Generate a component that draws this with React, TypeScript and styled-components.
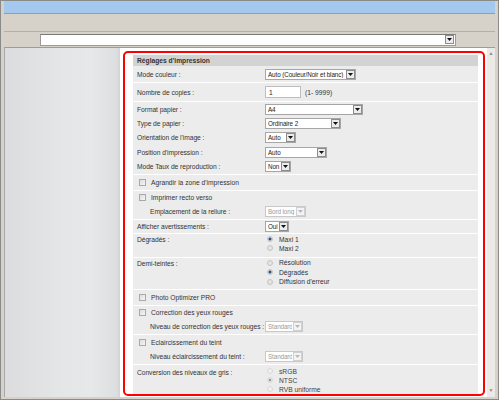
import React from "react";
import styled, { createGlobalStyle } from "styled-components";

const GlobalStyle = createGlobalStyle`
  html, body {
    margin: 0;
    padding: 0;
    background: #ffffff;
  }
  body {
    font-family: "Liberation Sans", Arial, sans-serif;
  }
`;

const Frame = styled.div`
  box-sizing: border-box;
  width: 499px;
  height: 400px;
  border: 1px solid #8a8a8a;
  padding: 0 3px 2px 3px;
  background: #d6d2ca;
  display: flex;
  flex-direction: column;
  overflow: hidden;
`;

const TitleBar = styled.div`
  height: 12px;
  flex: 0 0 auto;
  background: #a5c8ef;
  border-bottom: 1px solid #9c9c9c;
`;

const Toolbar = styled.div`
  height: 17px;
  flex: 0 0 auto;
  background: #d6d2ca;
  border-bottom: 1px solid #b4b0a8;
`;

const AddressRow = styled.div`
  height: 15px;
  flex: 0 0 auto;
  display: flex;
  align-items: center;
  padding-left: 36px;
`;

const AddressBox = styled.div`
  box-sizing: border-box;
  width: 416px;
  height: 12px;
  background: #ffffff;
  border: 1px solid #9a9a9a;
  border-top-color: #7a7a7a;
  display: flex;
  justify-content: flex-end;
  align-items: center;
  padding-right: 1px;
`;

const Body = styled.div`
  flex: 1 1 auto;
  display: flex;
  border-top: 1px solid #9c9c9c;
  border-left: 1px solid #a8a8a8;
  min-height: 0;
`;

const Sidebar = styled.div`
  width: 115px;
  flex: 0 0 auto;
  background: linear-gradient(to right, #dcdcde, #e4e5e7 45%, #e7e8ea 75%, #dddee0 97%, #d2d3d5);
`;

const Main = styled.div`
  flex: 1 1 auto;
  display: flex;
  background: #ffffff;
  min-width: 0;
`;

const Content = styled.div`
  flex: 1 1 auto;
  display: flex;
  flex-direction: column;
  padding: 3px 2px 1px 3px;
  min-width: 0;
`;

const Scrollbar = styled.div`
  width: 8px;
  flex: 0 0 auto;
  background: #ebeae7;
  display: flex;
  flex-direction: column;
  justify-content: space-between;
  align-items: center;
  padding: 3px 0 4px;
  box-sizing: border-box;
`;

const RedBox = styled.div`
  flex: 1 1 auto;
  border: 2px solid #ff0000;
  border-radius: 5px;
  padding: 2px 5px 0 8px;
  overflow: hidden;
`;

const Panel = styled.div`
  background: #ececec;
  color: #333333;
  font-size: 6.7px;
  display: flex;
  flex-direction: column;
`;

const PanelHeader = styled.div`
  height: 11px;
  line-height: 11px;
  background: #d3d3d3;
  font-weight: bold;
  padding-left: 4px;
  color: #333333;
`;

const Group = styled.div<{ $pt?: number }>`
  display: flex;
  flex-direction: column;
  padding-top: ${(p) => p.$pt ?? 0}px;
  & + & {
    border-top: 1px solid #ffffff;
  }
`;

const Row = styled.div<{ $h: number }>`
  height: ${(p) => p.$h}px;
  display: flex;
  align-items: center;
  padding-left: 4px;
`;

const ChoiceRow = styled.div<{ $h: number }>`
  height: ${(p) => p.$h}px;
  display: flex;
  align-items: flex-start;
  padding-left: 4px;
`;

const Label = styled.div<{ $indent?: boolean; $lh?: number }>`
  width: ${(p) => (p.$indent ? 115 : 128)}px;
  padding-left: ${(p) => (p.$indent ? 13 : 0)}px;
  flex: 0 0 auto;
  white-space: nowrap;
  letter-spacing: -0.05px;
  line-height: ${(p) => (p.$lh ? `${p.$lh}px` : "normal")};
`;

const CheckLine = styled.label`
  display: flex;
  align-items: center;
  gap: 5px;
  padding-left: 2px;
  white-space: nowrap;
`;

const CheckBox = styled.span`
  box-sizing: border-box;
  width: 7px;
  height: 7px;
  border: 1px solid #a9a9a9;
  background: linear-gradient(135deg, #dcdcdc, #f6f6f6);
`;

const ChoiceList = styled.div<{ $line: number }>`
  display: flex;
  flex-direction: column;
  padding-left: 2px;
  & > * {
    height: ${(p) => p.$line}px;
  }
`;

const RadioLine = styled.div<{ $disabled?: boolean }>`
  display: flex;
  align-items: center;
  gap: 6px;
  white-space: nowrap;
  color: ${(p) => (p.$disabled ? "#444444" : "#333333")};
`;

const Radio = styled.span<{ $checked?: boolean; $disabled?: boolean }>`
  box-sizing: border-box;
  width: 6px;
  height: 6px;
  border-radius: 50%;
  border: 1px solid ${(p) => (p.$disabled ? "#d8d8d8" : "#c4c4c4")};
  background: ${(p) =>
    p.$checked
      ? p.$disabled
        ? "radial-gradient(circle, #9a9a9a 0 1.3px, #e6e6e6 1.6px)"
        : "radial-gradient(circle, #2a4f86 0 1.4px, #dfe6ef 1.7px)"
      : p.$disabled
      ? "#f0f0f0"
      : "#e4e4e4"};
`;

const SelectBox = styled.div<{ $w: number; $disabled?: boolean }>`
  box-sizing: border-box;
  width: ${(p) => p.$w}px;
  height: 11px;
  background: #ffffff;
  border: 1px solid ${(p) => (p.$disabled ? "#c8c8c8" : "#a6a6a6")};
  display: flex;
  align-items: center;
  gap: 1px;
  padding-left: 2px;
  font-size: 6.3px;
  letter-spacing: -0.1px;
  color: ${(p) => (p.$disabled ? "#9a9a9a" : "#222222")};
  white-space: nowrap;
  overflow: hidden;
`;

const SelectText = styled.span`
  flex: 1 1 auto;
  overflow: hidden;
`;

const ArrowButton = styled.span<{ $disabled?: boolean }>`
  box-sizing: border-box;
  width: 9px;
  height: 9px;
  flex: 0 0 auto;
  border: 1px solid ${(p) => (p.$disabled ? "#d0d0d0" : "#8c8c8c")};
  background: ${(p) => (p.$disabled ? "#f4f4f4" : "#ececec")};
  display: flex;
  align-items: center;
  justify-content: center;
`;

const TextInput = styled.div`
  box-sizing: border-box;
  width: 36px;
  height: 12px;
  background: #ffffff;
  border: 1px solid #bdbdbd;
  padding-left: 3px;
  display: flex;
  align-items: center;
  color: #222222;
`;

const Hint = styled.span`
  margin-left: 4px;
`;

const ScrollArrow = styled.span`
  font-size: 5px;
  color: #8a8a8a;
  line-height: 5px;
`;

function Triangle({ color = "#111111" }: { color?: string }) {
  return (
    <svg width="5" height="3" viewBox="0 0 5 3">
      <path d="M0 0 H5 L2.5 3 Z" fill={color} />
    </svg>
  );
}

function Select({ w, value, disabled }: { w: number; value: string; disabled?: boolean }) {
  return (
    <SelectBox $w={w} $disabled={disabled}>
      <SelectText>{value}</SelectText>
      <ArrowButton $disabled={disabled}>
        <Triangle color={disabled ? "#b8b8b8" : "#111111"} />
      </ArrowButton>
    </SelectBox>
  );
}

function Check({ text }: { text: string }) {
  return (
    <CheckLine>
      <CheckBox />
      {text}
    </CheckLine>
  );
}

export default function App() {
  return (
    <>
      <GlobalStyle />
      <Frame>
        <TitleBar />
        <Toolbar />
        <AddressRow>
          <AddressBox>
            <ArrowButton>
              <Triangle />
            </ArrowButton>
          </AddressBox>
        </AddressRow>
        <Body>
          <Sidebar />
          <Main>
            <Content>
              <RedBox>
                <Panel>
                  <PanelHeader>Réglages d'impression</PanelHeader>

                  <Group>
                    <Row $h={16}>
                      <Label>Mode couleur :</Label>
                      <Select w={91} value="Auto (Couleur/Noir et blanc)" />
                    </Row>
                  </Group>

                  <Group>
                    <Row $h={18}>
                      <Label>Nombre de copies :</Label>
                      <TextInput>1</TextInput>
                      <Hint>(1- 9999)</Hint>
                    </Row>
                  </Group>

                  <Group>
                    <Row $h={14.4}>
                      <Label>Format papier :</Label>
                      <Select w={98} value="A4" />
                    </Row>
                    <Row $h={14.4}>
                      <Label>Type de papier :</Label>
                      <Select w={76} value="Ordinaire 2" />
                    </Row>
                    <Row $h={14.4}>
                      <Label>Orientation de l'image :</Label>
                      <Select w={31} value="Auto" />
                    </Row>
                    <Row $h={14.4}>
                      <Label>Position d'impression :</Label>
                      <Select w={62} value="Auto" />
                    </Row>
                    <Row $h={14.4}>
                      <Label>Mode Taux de reproduction :</Label>
                      <Select w={26} value="Non" />
                    </Row>
                  </Group>

                  <Group>
                    <Row $h={15}>
                      <Check text="Agrandir la zone d'impression" />
                    </Row>
                  </Group>

                  <Group>
                    <Row $h={14}>
                      <Check text="Imprimer recto verso" />
                    </Row>
                    <Row $h={14}>
                      <Label $indent>Emplacement de la reliure :</Label>
                      <Select w={41} value="Bord long" disabled />
                    </Row>
                  </Group>

                  <Group>
                    <Row $h={13}>
                      <Label>Afficher avertissements :</Label>
                      <Select w={24} value="Oui" />
                    </Row>
                  </Group>

                  <Group $pt={1}>
                    <ChoiceRow $h={22}>
                      <Label $lh={9}>Dégradés :</Label>
                      <ChoiceList $line={9}>
                        <RadioLine>
                          <Radio $checked />
                          Maxi 1
                        </RadioLine>
                        <RadioLine>
                          <Radio />
                          Maxi 2
                        </RadioLine>
                      </ChoiceList>
                    </ChoiceRow>
                  </Group>

                  <Group>
                    <ChoiceRow $h={31}>
                      <Label $lh={11}>Demi-teintes :</Label>
                      <ChoiceList $line={9.5}>
                        <RadioLine>
                          <Radio />
                          Résolution
                        </RadioLine>
                        <RadioLine>
                          <Radio $checked />
                          Dégradés
                        </RadioLine>
                        <RadioLine>
                          <Radio />
                          Diffusion d'erreur
                        </RadioLine>
                      </ChoiceList>
                    </ChoiceRow>
                  </Group>

                  <Group>
                    <Row $h={15}>
                      <Check text="Photo Optimizer PRO" />
                    </Row>
                  </Group>

                  <Group>
                    <Row $h={14}>
                      <Check text="Correction des yeux rouges" />
                    </Row>
                    <Row $h={14}>
                      <Label $indent>Niveau de correction des yeux rouges :</Label>
                      <Select w={38} value="Standard" disabled />
                    </Row>
                  </Group>

                  <Group>
                    <Row $h={14.5}>
                      <Check text="Eclaircissement du teint" />
                    </Row>
                    <Row $h={14.5}>
                      <Label $indent>Niveau éclaircissement du teint :</Label>
                      <Select w={38} value="Standard" disabled />
                    </Row>
                  </Group>

                  <Group $pt={2}>
                    <ChoiceRow $h={30}>
                      <Label $lh={11}>Conversion des niveaux de gris :</Label>
                      <ChoiceList $line={9}>
                        <RadioLine $disabled>
                          <Radio $disabled />
                          sRGB
                        </RadioLine>
                        <RadioLine $disabled>
                          <Radio $checked $disabled />
                          NTSC
                        </RadioLine>
                        <RadioLine $disabled>
                          <Radio $disabled />
                          RVB uniforme
                        </RadioLine>
                      </ChoiceList>
                    </ChoiceRow>
                  </Group>
                </Panel>
              </RedBox>
            </Content>
            <Scrollbar>
              <ScrollArrow>▲</ScrollArrow>
              <ScrollArrow>▼</ScrollArrow>
            </Scrollbar>
          </Main>
        </Body>
      </Frame>
    </>
  );
}
